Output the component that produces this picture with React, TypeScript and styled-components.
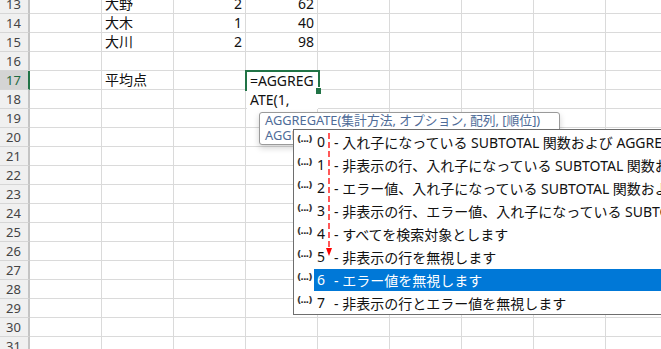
import React from "react";
import styled, { createGlobalStyle } from "styled-components";

const GlobalStyle = createGlobalStyle`
  html, body { margin: 0; padding: 0; background: #fff; overflow: hidden; }
  body { font-family: "Noto Sans", "Noto Sans CJK JP", sans-serif; }
`;

const Stage = styled.div`
  position: relative;
  width: 661px;
  height: 349px;
  overflow: hidden;
  background: #fff;
`;

const Sheet = styled.div`
  display: flex;
  flex-direction: column;
  margin-top: -5px;
`;

const Row = styled.div`
  display: grid;
  grid-template-columns: 30px repeat(10, 72px);
  height: 19px;
`;

const RowHeader = styled.div<{ $active?: boolean }>`
  box-sizing: border-box;
  background: ${(p) => (p.$active ? "#d4d4d4" : "#f0f0f0")};
  border-right: 2px solid ${(p) => (p.$active ? "#217346" : "#c4c4c4")};
  border-bottom: 1px solid #d6d6d6;
  color: ${(p) => (p.$active ? "#1f6a40" : "#444")};
  font-family: "Noto Sans", sans-serif;
  font-size: 13px;
  line-height: 18px;
  text-align: center;
  padding-right: 1px;
`;

const Cell = styled.div<{ $align?: "left" | "right" }>`
  box-sizing: border-box;
  border-right: 1px solid #dadada;
  border-bottom: 1px solid #dadada;
  padding: 0 3px;
  font-family: "Noto Sans", "Noto Sans CJK JP", sans-serif;
  font-size: 14px;
  line-height: 18px;
  color: #111;
  text-align: ${(p) => p.$align ?? "left"};
  white-space: nowrap;
  overflow: hidden;
`;

const EditBox = styled.div`
  position: absolute;
  left: 247px;
  top: 71px;
  width: 71px;
  height: 38px;
  background: #fff;
  box-sizing: border-box;
  padding: 0 2px 0 3px;
  font-family: "Noto Sans", sans-serif;
  font-size: 14px;
  line-height: 19px;
  color: #111;
  white-space: nowrap;
`;

const EditFrame = styled.div`
  position: absolute;
  left: 245px;
  top: 70px;
  width: 75px;
  height: 21px;
  box-sizing: border-box;
  border: 2px solid #217346;
  border-bottom: none;
  pointer-events: none;
`;

const FillHandle = styled.div`
  position: absolute;
  right: -3px;
  bottom: -3px;
  width: 5px;
  height: 6px;
  background: #217346;
  border-top: 1px solid #fff;
`;

const Tooltip = styled.div`
  position: absolute;
  left: 259px;
  top: 112px;
  width: 301px;
  height: 33px;
  box-sizing: border-box;
  border: 1px solid #9a9a9a;
  border-radius: 3px;
  background: #fff;
  box-shadow: 0 3px 6px rgba(0, 0, 0, 0.18);
  padding: 0 5px;
  font-family: "Noto Sans", "Noto Sans CJK JP", sans-serif;
  font-size: 12.8px;
  line-height: 15px;
  color: #4f6c98;
  white-space: nowrap;
  overflow: hidden;
`;

const Dropdown = styled.div`
  position: absolute;
  left: 293px;
  top: 129px;
  width: 420px;
  box-sizing: border-box;
  border: 1px solid #6e6e6e;
  background: #fff;
  display: flex;
  flex-direction: column;
`;

const Item = styled.div`
  display: flex;
  align-items: center;
  height: 23px;
`;

const ItemIcon = styled.span`
  width: 20px;
  flex: none;
  box-sizing: border-box;
  padding-left: 3px;
  margin-bottom: 5px;
  font-family: "DejaVu Sans", sans-serif;
  font-size: 9.5px;
  font-weight: bold;
  color: #333;
  letter-spacing: -1px;
  line-height: 10px;
`;

const ItemBody = styled.div<{ $selected?: boolean }>`
  flex: 1;
  display: flex;
  align-items: center;
  height: 22px;
  padding-left: 3px;
  background: ${(p) => (p.$selected ? "#0078d7" : "transparent")};
  color: ${(p) => (p.$selected ? "#fff" : "#111")};
  font-family: "Noto Sans", "Noto Sans CJK JP", sans-serif;
  font-size: 14px;
  white-space: nowrap;
  overflow: hidden;
`;

const Num = styled.span`
  width: 17px;
  flex: none;
`;

const Arrow = styled.svg`
  position: absolute;
  left: 324px;
  top: 133px;
  pointer-events: none;
`;

type RowData = { n: number; b?: string; c?: string; d?: string };

const rows: RowData[] = [
  { n: 13, b: "大野", c: "2", d: "62" },
  { n: 14, b: "大木", c: "1", d: "40" },
  { n: 15, b: "大川", c: "2", d: "98" },
  { n: 16 },
  { n: 17, b: "平均点" },
];
for (let i = 18; i <= 31; i++) rows.push({ n: i });

const options = [
  "入れ子になっている SUBTOTAL 関数および AGGREGATE 関数を無視します",
  "非表示の行、入れ子になっている SUBTOTAL 関数および AGGREGATE 関数を無視します",
  "エラー値、入れ子になっている SUBTOTAL 関数および AGGREGATE 関数を無視します",
  "非表示の行、エラー値、入れ子になっている SUBTOTAL 関数および AGGREGATE 関数を無視します",
  "すべてを検索対象とします",
  "非表示の行を無視します",
  "エラー値を無視します",
  "非表示の行とエラー値を無視します",
];

export default function App() {
  return (
    <Stage>
      <GlobalStyle />
      <Sheet>
        {rows.map((r) => (
          <Row key={r.n}>
            <RowHeader $active={r.n === 17}>{r.n}</RowHeader>
            <Cell />
            <Cell>{r.b}</Cell>
            <Cell $align="right">{r.c}</Cell>
            <Cell $align="right">{r.d}</Cell>
            <Cell />
            <Cell />
            <Cell />
            <Cell />
            <Cell />
            <Cell />
          </Row>
        ))}
      </Sheet>

      <EditBox>
        =AGGREG
        <br />
        ATE(1,
      </EditBox>
      <EditFrame>
        <FillHandle />
      </EditFrame>

      <Tooltip>
        <div>AGGREGATE(集計方法, オプション, 配列, [順位])</div>
        <div>AGGREGATE(集計方法, オプション, 参照1, ...)</div>
      </Tooltip>

      <Dropdown>
        {options.map((o, i) => (
          <Item key={i}>
            <ItemIcon>(...)</ItemIcon>
            <ItemBody $selected={i === 6}>
              <Num>{i}</Num>
              <span>- {o}</span>
            </ItemBody>
          </Item>
        ))}
      </Dropdown>

      <Arrow width="10" height="126" viewBox="0 0 10 126">
        <line x1="5" y1="0" x2="5" y2="116" stroke="#ff0000" strokeWidth="1.3" strokeDasharray="6 3" />
        <polygon points="5,123 2,115 8,115" fill="#ff0000" />
      </Arrow>
    </Stage>
  );
}
